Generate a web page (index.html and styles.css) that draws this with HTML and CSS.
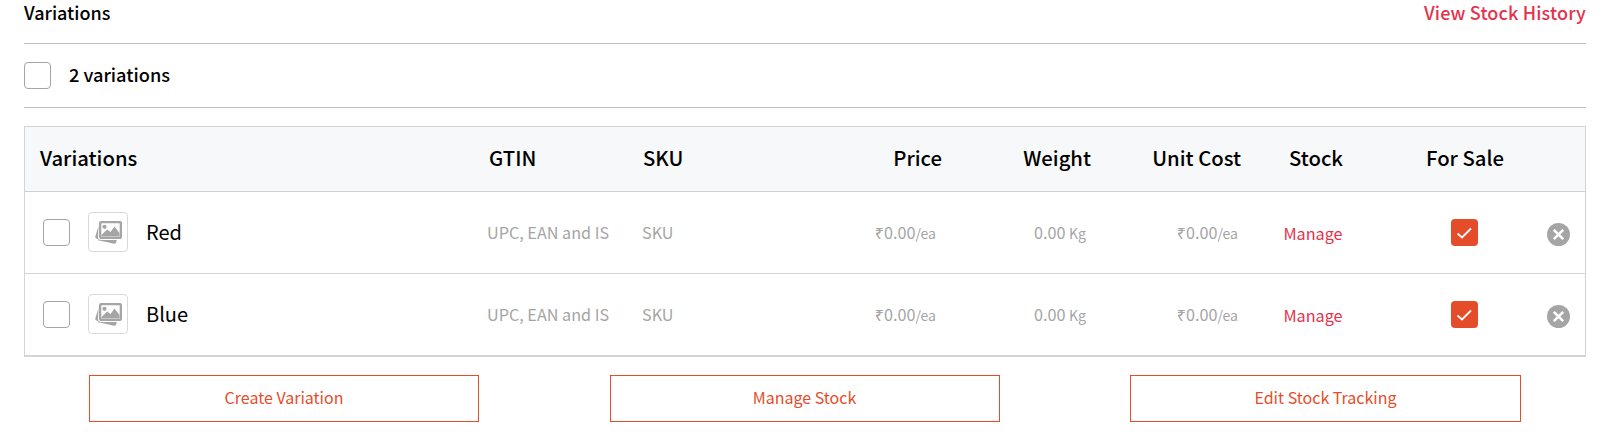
FILE: index.html
```html
<!DOCTYPE html>
<html lang="en">
<head>
    <meta charset="UTF-8">
    <meta name="viewport" content="width=device-width, initial-scale=1.0">
    <title>Variations</title>
    <link rel="stylesheet" href="styles.css">
</head>
<body>
    <svg class="defs" width="0" height="0">
        <symbol id="pic" viewBox="0 0 27 23">
            <path d="M3.500 5 .3 15.500q-.4 1.500 1 2l2 .8-.3 1q4 .8 16 3.400 1.500.3 2-1l.8-2.700H6q-3 0-3-3z" fill="#a5a5a5"/>
            <path fill-rule="evenodd" d="M6 0h19q2 0 2 2v14q0 2-2 2H6q-2 0-2-2V2q0-2 2-2zm.8 2.300q-.5 0-.5.5v12.400q0 .5.5.5h17.400q.5 0 .5-.5V2.800q0-.5-.5-.5z" fill="#a5a5a5"/>
            <circle cx="9.500" cy="5.800" r="2.100" fill="#a5a5a5"/>
            <path d="M6.500 15.500V14l5.500-5.500 3.500 2.500L19.500 5.500l5 6.500v3.500z" fill="#a5a5a5"/>
        </symbol>
        <symbol id="tick" viewBox="0 0 27 27">
            <rect width="27" height="27" rx="4" fill="#e54d2a"/>
            <path d="M6.500 14.500l4.500 4L20 9.500" fill="none" stroke="#fff" stroke-width="1.800"/>
        </symbol>
        <symbol id="remove" viewBox="0 0 23 23">
            <circle cx="11.500" cy="11.500" r="11.500" fill="#a5a5a5"/>
            <path d="M6.800 6.800l9.400 9.400M16.200 6.800l-9.400 9.400" fill="none" stroke="#fff" stroke-width="2.600"/>
        </symbol>
    </svg>

    <div class="wrap">
        <div class="top">
            <span class="title">Variations</span>
            <a class="history">View Stock History</a>
        </div>
        <div class="count">
            <span class="check"></span>
            <span class="count-label">2 variations</span>
        </div>

        <div class="table">
            <div class="row head">
                <div class="name">Variations</div>
                <div class="gtin">GTIN</div>
                <div class="sku">SKU</div>
                <div class="num">Price</div>
                <div class="num weight">Weight</div>
                <div class="num">Unit Cost</div>
                <div class="mid stock">Stock</div>
                <div class="mid sale">For Sale</div>
                <div></div>
            </div>
            <div class="row item">
                <div class="name">
                    <span class="check"></span>
                    <span class="thumb"><svg width="27" height="23"><use href="#pic"/></svg></span>
                    <span class="label">Red</span>
                </div>
                <div class="text">UPC, EAN and IS</div>
                <div class="text">SKU</div>
                <div class="text num">₹0.00<small>/ea</small></div>
                <div class="text num">0.00 <small>Kg</small></div>
                <div class="text num cost">₹0.00<small>/ea</small></div>
                <div class="mid manage-cell"><a class="manage">Manage</a></div>
                <div class="mid"><svg class="icon" width="27" height="27"><use href="#tick"/></svg></div>
                <div class="mid remove"><svg class="icon" width="23" height="23"><use href="#remove"/></svg></div>
            </div>
            <div class="row item">
                <div class="name">
                    <span class="check"></span>
                    <span class="thumb"><svg width="27" height="23"><use href="#pic"/></svg></span>
                    <span class="label">Blue</span>
                </div>
                <div class="text">UPC, EAN and IS</div>
                <div class="text">SKU</div>
                <div class="text num">₹0.00<small>/ea</small></div>
                <div class="text num">0.00 <small>Kg</small></div>
                <div class="text num cost">₹0.00<small>/ea</small></div>
                <div class="mid manage-cell"><a class="manage">Manage</a></div>
                <div class="mid"><svg class="icon" width="27" height="27"><use href="#tick"/></svg></div>
                <div class="mid remove"><svg class="icon" width="23" height="23"><use href="#remove"/></svg></div>
            </div>
        </div>

        <div class="actions">
            <button>Create Variation</button>
            <button>Manage Stock</button>
            <button>Edit Stock Tracking</button>
        </div>
    </div>
</body>
</html>
```

FILE: styles.css
```css
*{
    box-sizing: border-box;
}
body{
    margin: 0;
    background-color: #fff;
    color: #000;
    font-family: "Noto Sans CJK KR", "Noto Sans", sans-serif;
}
.defs{
    display: block;
    height: 0;
}
.wrap{
    width: 1562px;
    margin-left: 24px;
}
.top{
    display: flex;
    justify-content: space-between;
    height: 44px;
    border-bottom: 1px solid #bfbfbf;
    line-height: 25px;
}
.title{
    font-size: 18px;
    font-weight: 500;
}
.history{
    font-size: 18px;
    font-weight: 500;
    letter-spacing: .15px;
    color: #e5324b;
}
.count{
    display: flex;
    align-items: center;
    height: 64px;
    border-bottom: 1px solid #bfbfbf;
}
.count-label{
    margin-left: 18px;
    padding-bottom: 3px;
    font-size: 18.2px;
    font-weight: 500;
}
.check{
    flex: none;
    width: 27px;
    height: 27px;
    border: 1px solid #a5a5a5;
    border-radius: 4px;
    background-color: #fff;
}
.table{
    margin-top: 18px;
    border: 1px solid #d4d4d4;
    border-bottom-width: 2px;
}
.row{
    display: grid;
    grid-template-columns: 462px 155px 150px 150px 150px 149px 144px 158px 1fr;
    align-items: center;
}
.head{
    height: 65px;
    background-color: #f7f8fa;
    border-bottom: 1px solid #cfcfcf;
    font-size: 20.3px;
    font-weight: 500;
}
.head > div{
    padding-bottom: 4px;
}
.head .gtin{
    padding-left: 2px;
}
.head .sku{
    padding-left: 1px;
}
.head .weight{
    padding-right: 1px;
}
.head .stock{
    padding-left: 6px;
}
.head .sale{
    padding-left: 2px;
}
.item{
    height: 81px;
    color: #a5a5a5;
    font-size: 16.2px;
}
.item + .item{
    height: 82px;
    border-top: 1px solid #d4d4d4;
}
.text{
    padding-bottom: 1px;
}
.name{
    display: flex;
    align-items: center;
    padding-left: 15px;
}
.item .name{
    padding-left: 18px;
}
.thumb{
    display: flex;
    align-items: center;
    justify-content: center;
    width: 40px;
    height: 40px;
    margin-left: 18px;
    margin-bottom: 1px;
    border: 1px solid #d9d9d9;
    border-radius: 4px;
}
.label{
    margin-left: 18px;
    padding-bottom: 3px;
    font-size: 20px;
    color: #000;
}
.num{
    text-align: right;
}
.item .num{
    padding-right: 6px;
}
.item .cost{
    padding-right: 3px;
}
.mid{
    text-align: center;
}
.remove{
    padding: 4px 12px 0 0;
}
.manage-cell{
    padding-top: 1px;
}
small{
    font-size: 14px;
}
.manage{
    color: #e5324b;
}
.icon{
    display: block;
    margin: 0 auto;
}
.actions{
    display: flex;
    justify-content: space-between;
    padding: 18px 65px 0;
}
button{
    width: 390px;
    height: 47px;
    padding: 0 0 4px;
    border: 1px solid #e54d2a;
    background-color: #fff;
    color: #e54d2a;
    font-family: inherit;
    font-size: 16px;
}
button:last-child{
    width: 391px;
}
```
